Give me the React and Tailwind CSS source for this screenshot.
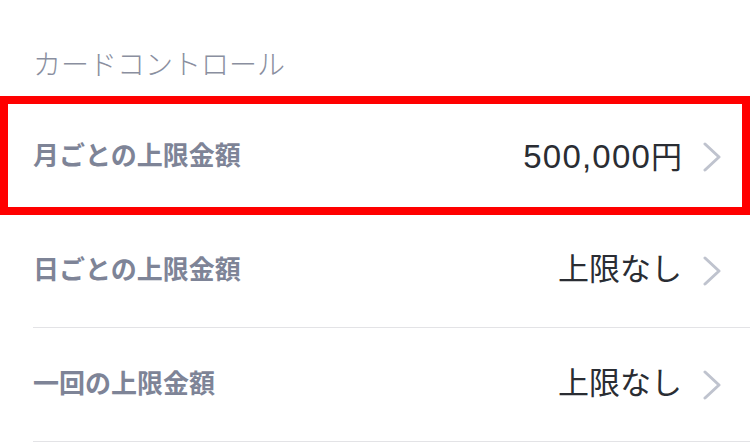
import React from 'react';

const rows = [
  { label: '月ごとの上限金額', amount: '500,000', unit: '円', selected: true },
  { label: '日ごとの上限金額', unit: '上限なし' },
  { label: '一回の上限金額', unit: '上限なし' },
];

function Chevron() {
  return (
    <svg width="20" height="30" viewBox="0 0 20 30" fill="none" className="shrink-0">
      <path d="M3 2l14 13L3 28" stroke="#bfc3ce" strokeWidth="3" strokeLinecap="round" strokeLinejoin="round" />
    </svg>
  );
}

export default function App() {
  return (
    <div
      className="w-[750px] h-[442px] bg-white overflow-hidden"
      style={{ fontFamily: '"Liberation Sans", "Noto Sans CJK JP", sans-serif' }}
    >
      {/* Section header */}
      <div className="h-[100px] pl-[33px] pt-[48px]">
        <h2 className="text-[28px] leading-[36px] font-light text-[#8a8fa0]">カードコントロール</h2>
      </div>

      {/* Rows */}
      {rows.map((row) => (
        <div key={row.label} className="relative">
          <div className="ml-[33px] h-[114px] border-b border-[#e3e3e6] flex items-center justify-between pr-[28px]">
            <span className="text-[26px] font-semibold text-[#7e8497]">{row.label}</span>
            <div className="flex items-center gap-[20px]">
              <span className="text-[31px] text-[#2a2d33] flex items-baseline">
                {row.amount && <span className="text-[33px] tracking-[1.2px]">{row.amount}</span>}
                <span>{row.unit}</span>
              </span>
              <Chevron />
            </div>
          </div>
          {row.selected && (
            <div className="absolute left-0 right-0 top-[-4px] bottom-[-1px] border-[8px] border-[#ff0000] pointer-events-none" />
          )}
        </div>
      ))}
    </div>
  );
}
